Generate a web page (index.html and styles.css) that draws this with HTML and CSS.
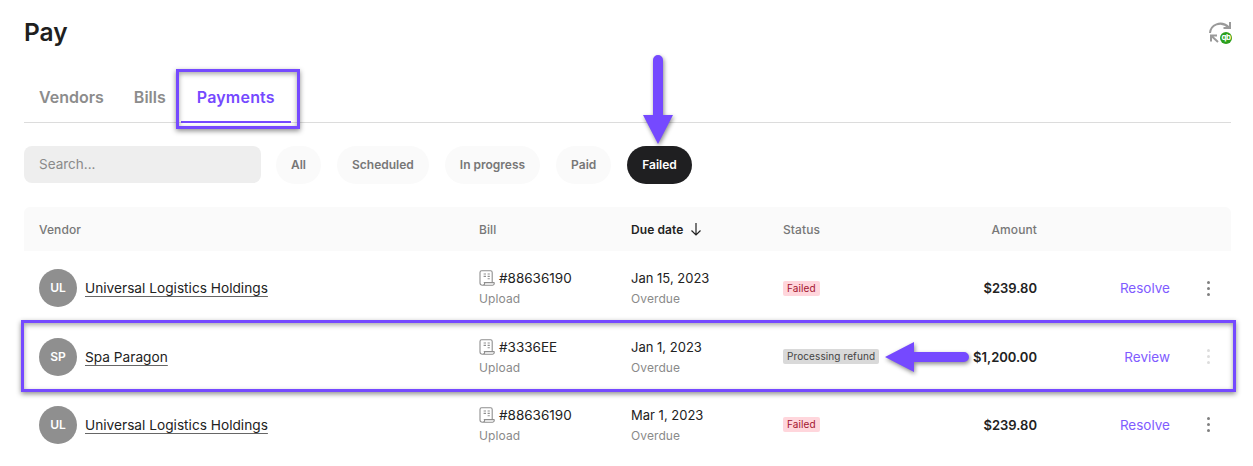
FILE: index.html
```html
<!DOCTYPE html>
<html lang="en">
<head>
    <meta charset="UTF-8">
    <title>Pay</title>
    <link rel="stylesheet" href="styles.css">
</head>
<body>
    <svg class="icon-defs" width="0" height="0">
        <symbol id="bill-icon" viewBox="0 0 16 16">
            <path d="M3.6 15.2 C2 15.2 1 14.4 1 13 V2.4 C1 1.4 1.6 0.8 2.6 0.8 H11.6 C12.6 0.8 13.2 1.4 13.2 2.4 V12.6 M3.6 15.2 H13.6 C15 15.2 15.6 13.8 15 12.6 H5.4 C5.9 13.8 5.2 15.2 3.6 15.2 Z" fill="none" stroke="#8f8f8f" stroke-width="1.1"/>
            <path d="M4.6 4 H7 M8.6 4 H10.8 M8.6 6.4 H10.8 M8.6 8.8 H10.8 M4.6 6.4 H7" fill="none" stroke="#8f8f8f" stroke-width="1.1"/>
        </symbol>
    </svg>

    <div class="page">
        <header class="page-head">
            <h1>Pay</h1>
            <div class="sync">
                <svg width="24" height="24" viewBox="0 0 24 24">
                    <path d="M2 13 C2.5 5.5 12.5 -0.5 21 7.5" fill="none" stroke="#9a9a9a" stroke-width="2"/>
                    <path d="M15.5 8 H22 V2" fill="none" stroke="#9a9a9a" stroke-width="2"/>
                    <path d="M10 22 L3.5 16 M3 21.5 V15.5 H9" fill="none" stroke="#9a9a9a" stroke-width="2"/>
                </svg>
                <span class="qb">qb</span>
            </div>
        </header>

        <nav class="tabs">
            <a class="tab">Vendors</a>
            <a class="tab">Bills</a>
            <a class="tab active">Payments</a>
        </nav>

        <div class="filters">
            <div class="search">Search...</div>
            <span class="chip">All</span>
            <span class="chip">Scheduled</span>
            <span class="chip">In progress</span>
            <span class="chip">Paid</span>
            <span class="chip selected">Failed</span>
        </div>

        <div class="table">
            <div class="row head">
                <div>Vendor</div>
                <div>Bill</div>
                <div class="sorted">Due date
                    <svg width="12" height="14" viewBox="0 0 12 14"><path d="M6 1 V12.5 M1.5 8.5 L6 13 L10.5 8.5" fill="none" stroke="#222" stroke-width="1.2"/></svg>
                </div>
                <div>Status</div>
                <div class="amount-head">Amount</div>
                <div></div>
                <div></div>
            </div>

            <div class="row">
                <div class="vendor"><span class="avatar">UL</span><a>Universal Logistics Holdings</a></div>
                <div>
                    <div class="main bill"><svg width="16" height="16"><use href="#bill-icon"/></svg>#88636190</div>
                    <div class="sub">Upload</div>
                </div>
                <div>
                    <div class="main date">Jan 15, 2023</div>
                    <div class="sub">Overdue</div>
                </div>
                <div class="status"><span class="badge failed">Failed</span></div>
                <div class="amount">$239.80</div>
                <a class="action">Resolve</a>
                <div class="dots"><i></i><i></i><i></i></div>
            </div>

            <div class="row">
                <div class="vendor"><span class="avatar">SP</span><a>Spa Paragon</a></div>
                <div>
                    <div class="main bill"><svg width="16" height="16"><use href="#bill-icon"/></svg>#3336EE</div>
                    <div class="sub">Upload</div>
                </div>
                <div>
                    <div class="main date">Jan 1, 2023</div>
                    <div class="sub">Overdue</div>
                </div>
                <div class="status"><span class="badge refund">Processing refund</span></div>
                <div class="amount">$1,200.00</div>
                <a class="action">Review</a>
                <div class="dots faint"><i></i><i></i><i></i></div>
            </div>

            <div class="row">
                <div class="vendor"><span class="avatar">UL</span><a>Universal Logistics Holdings</a></div>
                <div>
                    <div class="main bill"><svg width="16" height="16"><use href="#bill-icon"/></svg>#88636190</div>
                    <div class="sub">Upload</div>
                </div>
                <div>
                    <div class="main date">Mar 1, 2023</div>
                    <div class="sub">Overdue</div>
                </div>
                <div class="status"><span class="badge failed">Failed</span></div>
                <div class="amount">$239.80</div>
                <a class="action">Resolve</a>
                <div class="dots"><i></i><i></i><i></i></div>
            </div>
        </div>

        <!-- annotations drawn on top of the screen -->
        <div class="mark mark-tab"></div>
        <div class="mark mark-row"></div>
        <svg class="arrow arrow-down" width="32" height="90" viewBox="0 0 32 90">
            <path d="M11 5 A5 5 0 0 1 21 5 V60 H31 L16 89 L1 60 H11 Z" fill="#7549ff"/>
        </svg>
        <svg class="arrow arrow-left" width="86" height="32" viewBox="0 0 86 32">
            <path d="M1 16 L30 1 V11 H80 A5 5 0 0 1 80 21 H30 V31 Z" fill="#7549ff"/>
        </svg>
    </div>
</body>
</html>
```

FILE: styles.css
```css
* {
    box-sizing: border-box;
}
body {
    margin: 0;
    background-color: #ffffff;
    color: #222222;
    font-family: Inter, "Open Sans", sans-serif;
    overflow: hidden;
}
.icon-defs {
    position: absolute;
}
.page {
    position: relative;
    width: 1253px;
    height: 466px;
    padding: 0 22px 0 24px;
    overflow: hidden;
}
.page-head {
    display: flex;
    justify-content: space-between;
    align-items: flex-start;
    height: 69px;
}
h1 {
    margin: 17px 0 0;
    font-size: 24.5px;
    line-height: 30px;
    font-weight: 600;
    color: #1f1f1f;
}
.sync {
    position: relative;
    margin: 20px 0 0;
    width: 23px;
    height: 24px;
}
.qb {
    position: absolute;
    right: -1px;
    bottom: 0;
    width: 12px;
    height: 12px;
    border-radius: 50%;
    background-color: #2ca01c;
    color: #ffffff;
    font-size: 8px;
    line-height: 11px;
    font-weight: 700;
    text-align: center;
    letter-spacing: -0.5px;
}

/* tabs */
.tabs {
    display: flex;
    height: 54px;
    border-bottom: 1px solid #dcdcdc;
}
.tab {
    height: 54px;
    padding: 18px 15px 0;
    font-size: 16px;
    line-height: 20px;
    font-weight: 600;
    color: #8c8c8c;
}
.tab.active {
    padding: 18px 16px 0;
    color: #7549ff;
    border-bottom: 2px solid #7549ff;
    letter-spacing: 0.2px;
}

/* filters */
.filters {
    display: flex;
    align-items: flex-start;
    gap: 16px;
    margin-top: 23px;
}
.search {
    width: 237px;
    height: 37px;
    margin-right: -1px;
    padding-left: 15px;
    background-color: #eeeeee;
    border-radius: 8px;
    color: #8a8a8a;
    font-size: 13.5px;
    line-height: 36px;
}
.chip {
    height: 38px;
    padding: 0 15px;
    background-color: #fafafa;
    border-radius: 19px;
    color: #777777;
    font-size: 12px;
    line-height: 38px;
    font-weight: 600;
}
.chip.selected {
    background-color: #1f1f21;
    color: #ffffff;
}

/* table */
.table {
    margin-top: 23px;
}
.row {
    display: grid;
    grid-template-columns: 440px 152px 152px 160px 94px 133px 1fr;
    align-items: center;
    height: 68.4px;
    padding-left: 15px;
    font-size: 13.5px;
}
.row.head {
    height: 44px;
    margin-bottom: 3px;
    background-color: #fafafa;
    border-radius: 6px 6px 0 0;
    color: #777777;
    font-size: 12px;
    font-weight: 500;
    letter-spacing: 0.1px;
}
.row.head .sorted {
    display: flex;
    align-items: center;
    gap: 6px;
    color: #222222;
    font-weight: 600;
}
.amount-head {
    text-align: right;
}
.vendor {
    display: flex;
    align-items: center;
    gap: 8px;
}
.avatar {
    width: 38px;
    height: 38px;
    border-radius: 50%;
    background-color: #8f8f8f;
    color: #ffffff;
    font-size: 12px;
    line-height: 38px;
    font-weight: 600;
    text-align: center;
}
.vendor a {
    color: #222222;
    font-size: 13.7px;
    text-decoration: underline;
    text-decoration-color: #666666;
    text-decoration-thickness: 1px;
    text-underline-offset: 3px;
}
.main {
    padding-top: 1px;
    line-height: 20px;
}
.main.date {
    font-size: 13px;
}
.bill {
    display: flex;
    align-items: center;
    gap: 4px;
}
.sub {
    margin-top: 1px;
    color: #8a8a8a;
    font-size: 12px;
    line-height: 20px;
    letter-spacing: 0.1px;
}
.status {
    display: flex;
}
.badge {
    height: 15px;
    padding: 0 4px;
    border-radius: 2px;
    font-size: 10px;
    line-height: 15px;
    letter-spacing: 0.1px;
}
.badge.failed {
    background-color: #ffd6dc;
    color: #a3142f;
}
.badge.refund {
    background-color: #d9d9d9;
    color: #444444;
}
.amount {
    text-align: right;
    font-size: 13px;
    font-weight: 600;
}
.action {
    text-align: right;
    color: #7f5cff;
}
.dots {
    display: flex;
    flex-direction: column;
    align-items: center;
    gap: 3px;
    width: 76px;
}
.dots i {
    width: 3px;
    height: 3px;
    border-radius: 50%;
    background-color: #808080;
}
.dots.faint i {
    background-color: #dddddd;
}

/* annotations */
.mark {
    position: absolute;
    border: 3px solid #7549ff;
    box-shadow: 0 2px 5px rgba(0, 0, 0, 0.45), inset 0 2px 5px rgba(0, 0, 0, 0.35);
}
.mark-tab {
    left: 176px;
    top: 69px;
    width: 124px;
    height: 60px;
}
.mark-row {
    left: 21px;
    top: 320px;
    width: 1215px;
    height: 72px;
}
.arrow {
    position: absolute;
    filter: drop-shadow(1px 2px 2px rgba(0, 0, 0, 0.45));
}
.arrow-down {
    left: 642px;
    top: 55px;
}
.arrow-left {
    left: 884px;
    top: 341px;
}
```
